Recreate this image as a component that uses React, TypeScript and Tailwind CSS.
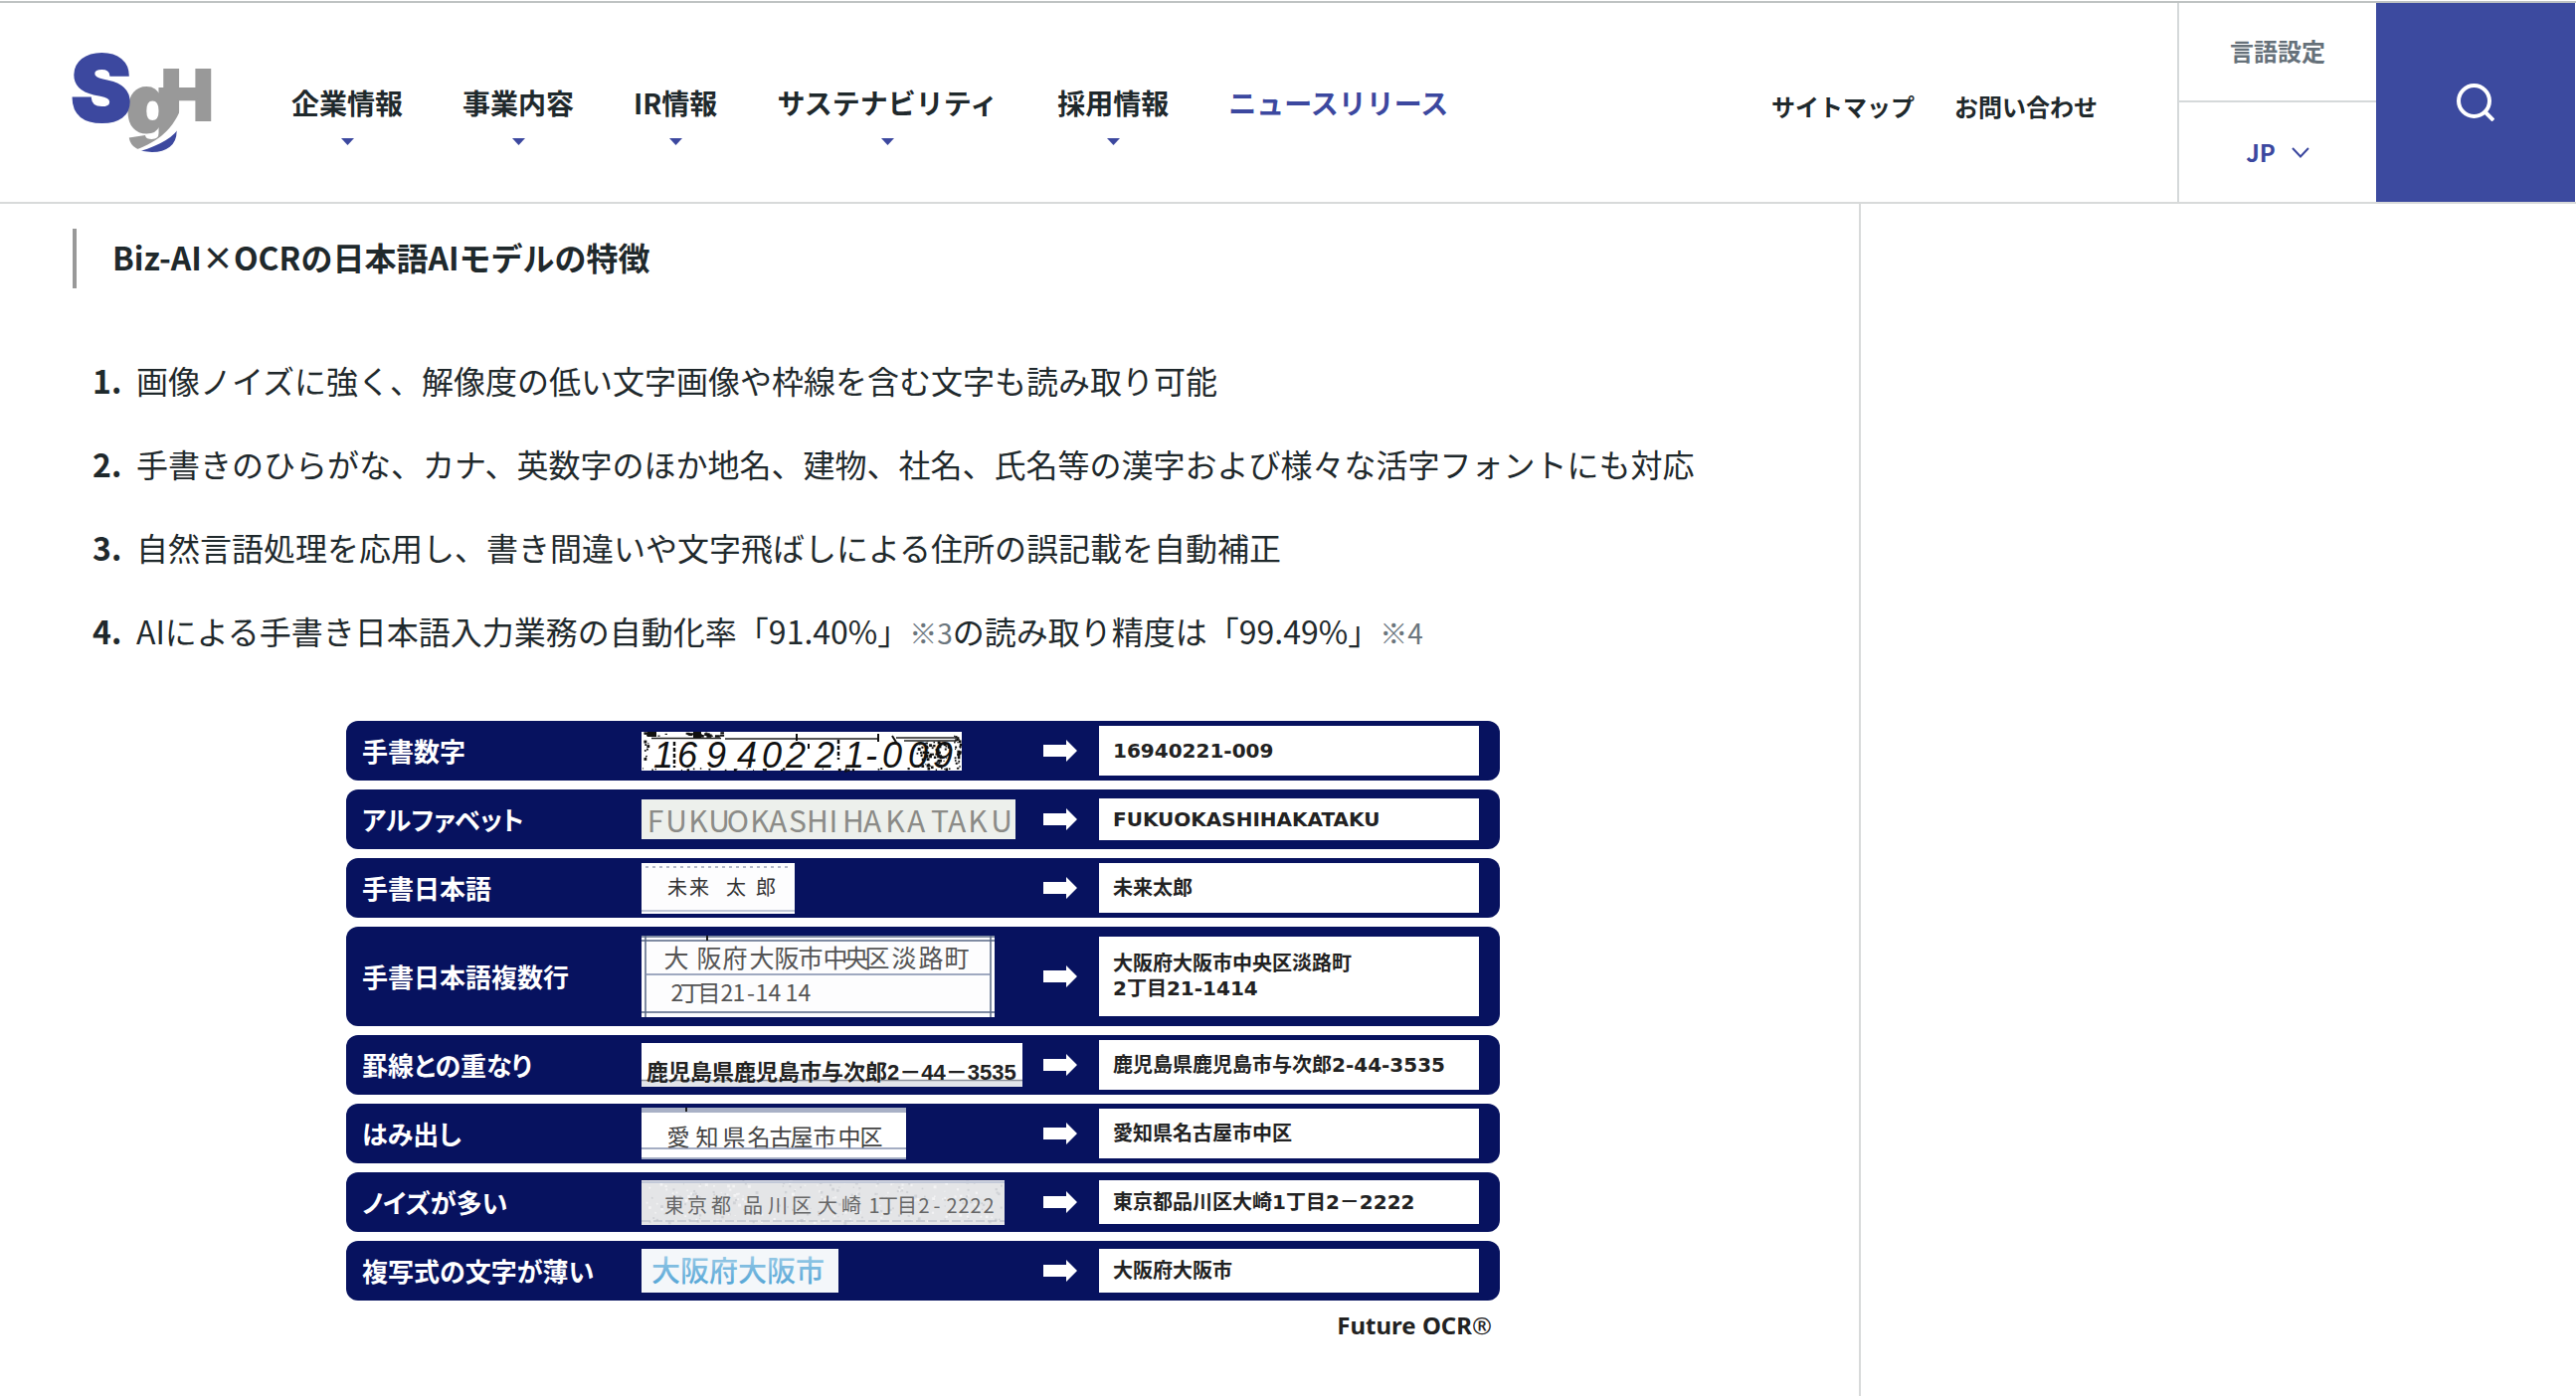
import type { ReactNode } from 'react';

const NAV = [
  { label: '企業情報', sub: true },
  { label: '事業内容', sub: true },
  { label: 'IR情報', sub: true },
  { label: 'サステナビリティ', sub: true },
  { label: '採用情報', sub: true },
  { label: 'ニュースリリース', sub: false },
];

// small deterministic generator for the speckles on scanned samples
function speckles(count: number, w: number, h: number, seed: number) {
  const out: { x: number; y: number; s: number }[] = [];
  let n = seed;
  const next = () => {
    n = (n * 1103515245 + 12345) % 2147483648;
    return n / 2147483648;
  };
  for (let i = 0; i < count; i++) out.push({ x: next() * w, y: next() * h, s: 1 + next() * 2 });
  return out;
}

function Glyphs({ text, xs, y, size, fill, skew = false }: { text: string; xs: number[]; y: number; size: number; fill: string; skew?: boolean }) {
  return (
    <text y={y} x={xs.join(' ')} fontSize={size} fill={fill} textAnchor="middle" fontStyle={skew ? 'italic' : 'normal'}>
      {text}
    </text>
  );
}

function Scan({ w, h, bg, children }: { w: number; h: number; bg: string; children: ReactNode }) {
  return (
    <svg width={w} height={h} viewBox={`0 0 ${w} ${h}`} className="block overflow-visible font-['Noto_Sans_CJK_JP',sans-serif] font-normal">
      <rect width={w} height={h} fill={bg} />
      {children}
    </svg>
  );
}

function NumberScan() {
  return (
    <Scan w={322} h={39} bg="#fff">
      {speckles(22, 80, 4, 7).map((p, i) => <rect key={i} x={p.x} y={p.y} width={p.s * 2} height={p.s} fill="#111" />)}
      {speckles(30, 318, 2, 31).map((p, i) => <rect key={i} x={p.x} y={36 + p.y} width={p.s} height={p.s} fill="#111" />)}
      {speckles(70, 34, 28, 11).map((p, i) => <rect key={i} x={276 + p.x} y={9 + p.y} width={p.s} height={p.s} fill="#111" />)}
      {speckles(30, 6, 37, 19).map((p, i) => <rect key={i} x={314 + p.x} y={p.y} width={p.s} height={p.s} fill="#111" />)}
      {speckles(10, 6, 20, 5).map((p, i) => <rect key={i} x={2 + p.x} y={8 + p.y} width={p.s} height={p.s} fill="#111" />)}
      <path d="M6 0h9v5H6zM52 0h8v6h-8z" fill="#111" />
      <path d="M10 6.500h70M84 7h154M256 6h62M264 9h52" stroke="#222" strokeWidth="1.500" />
      <path d="M33 10v26M198 8v20" stroke="#111" strokeWidth="2.500" strokeDasharray="4 2" />
      <path d="M156 2v7M238 2v8M252 4l5 8M168 12v5" stroke="#111" strokeWidth="2" />
      <g className="font-['Liberation_Sans',sans-serif]">
        <Glyphs text="16940221-009" xs={[22, 46, 75, 106, 131, 155, 184, 214, 231, 252, 278, 303]} y={36} size={36} fill="#111" skew />
      </g>
    </Scan>
  );
}

function AlphabetScan() {
  return (
    <Scan w={376} h={40} bg="#edf0ec">
      <Glyphs
        text="FUKUOKASHIHAKATAKU"
        xs={[14, 35, 57, 78, 97, 119, 137, 157, 177, 193, 213, 232, 255, 276, 300, 317, 338, 362]}
        y={33} size={30} fill="#8b8b87"
      />
    </Scan>
  );
}

function NameScan() {
  return (
    <Scan w={154} h={51} bg="#fdfdfe">
      <path d="M4 4h144" stroke="#9aa3b8" strokeWidth="1.5" strokeDasharray="3 4" />
      <path d="M0 48h154" stroke="#c3c9d6" strokeWidth="2" />
      <Glyphs text="未来太郎" xs={[36, 58, 95, 125]} y={32} size={20} fill="#333" />
    </Scan>
  );
}

function AddressScan() {
  return (
    <Scan w={355} h={82} bg="#fdfdfe">
      <path d="M0 1h355M0 5h355M0 77h355M4 0v82M351 0v82" stroke="#566584" strokeWidth="1.500" fill="none" />
      <path d="M4 39h347" stroke="#7f8cab" strokeWidth="1.500" />
      <path d="M66 0v5" stroke="#222" strokeWidth="2" />
      <Glyphs text="大阪府大阪市中央区淡路町" xs={[35, 68, 94, 121, 146, 170, 195, 216, 237, 264, 291, 317]} y={32} size={25} fill="#555" />
      <Glyphs text="2丁目21-1414" xs={[36, 50, 68, 86, 98, 110, 121, 134, 151, 164]} y={66} size={23} fill="#555" />
    </Scan>
  );
}

function RuledScan() {
  return (
    <Scan w={383} h={44} bg="#fff">
      <rect y="37" width="383" height="7" fill="#e3e5ea" />
      <path d="M0 37.500h383" stroke="#8e929c" strokeWidth="1.500" />
      <text x="5" y="37" fontSize="22" fill="#222" className="font-['Liberation_Sans','Noto_Sans_CJK_JP',sans-serif] font-bold">
        鹿児島県鹿児島市与次郎2－44－3535
      </text>
    </Scan>
  );
}

function OverflowScan() {
  return (
    <Scan w={266} h={52} bg="#fff">
      <rect width="266" height="5" fill="#a9b1c6" />
      <path d="M45 0v4" stroke="#222" strokeWidth="2" />
      <path d="M0 41h266M0 51h266" stroke="#8793b0" strokeWidth="1.500" />
      <Glyphs text="愛知県名古屋市中区" xs={[37, 66, 93, 118, 140, 161, 184, 209, 231]} y={38} size={23} fill="#444" />
    </Scan>
  );
}

function NoisyScan() {
  return (
    <Scan w={365} h={45} bg="#e4e5e7">
      {speckles(260, 362, 42, 3).map((p, i) => <rect key={i} x={p.x} y={p.y} width={p.s} height={p.s} fill={i % 2 ? '#f3f3f4' : '#d0d2d6'} />)}
      <path d="M0 2h365" stroke="#c2c9d9" strokeWidth="2" />
      <path d="M0 41h365" stroke="#b3b8c4" strokeWidth="1" strokeDasharray="9 3" />
      <Glyphs
        text="東京都品川区大崎1丁目2-2222"
        xs={[33, 56, 80, 112, 137, 161, 187, 211, 234, 248, 267, 284, 297, 312, 324, 336, 349]}
        y={33} size={20} fill="#666"
      />
    </Scan>
  );
}

function FaintScan() {
  return (
    <Scan w={198} h={44} bg="#f4f7fa">
      <defs>
        <linearGradient id="faint" x1="0" y1="0" x2="0" y2="1">
          <stop offset="0" stopColor="#a9d3ea" />
          <stop offset="1" stopColor="#4a9fd3" />
        </linearGradient>
      </defs>
      <text x="10" y="33" fontSize="29" fill="url(#faint)" className="font-medium">大阪府大阪市</text>
    </Scan>
  );
}

const ROWS = [
  { label: '手書数字', scan: <NumberScan />, result: ['16940221-009'], row: 'h-[60px]', box: 'h-[50px]' },
  { label: 'アルファベット', scan: <AlphabetScan />, result: ['FUKUOKASHIHAKATAKU'], row: 'h-[60px]', box: 'h-[42px]' },
  { label: '手書日本語', scan: <NameScan />, result: ['未来太郎'], row: 'h-[60px]', box: 'h-[50px]' },
  { label: '手書日本語複数行', scan: <AddressScan />, result: ['大阪府大阪市中央区淡路町', '2丁目21-1414'], row: 'h-[100px]', box: 'h-[80px]' },
  { label: '罫線との重なり', scan: <RuledScan />, result: ['鹿児島県鹿児島市与次郎2-44-3535'], row: 'h-[60px]', box: 'h-[50px]' },
  { label: 'はみ出し', scan: <OverflowScan />, result: ['愛知県名古屋市中区'], row: 'h-[60px]', box: 'h-[50px]' },
  { label: 'ノイズが多い', scan: <NoisyScan />, result: ['東京都品川区大崎1丁目2－2222'], row: 'h-[60px]', box: 'h-[44px]' },
  { label: '複写式の文字が薄い', scan: <FaintScan />, result: ['大阪府大阪市'], row: 'h-[60px]', box: 'h-[44px]' },
];

function Note({ children }: { children: ReactNode }) {
  return <span className="text-[28px] text-[#6b767d]">{children}</span>;
}

const FEATURES: ReactNode[] = [
  '画像ノイズに強く、解像度の低い文字画像や枠線を含む文字も読み取り可能',
  '手書きのひらがな、カナ、英数字のほか地名、建物、社名、氏名等の漢字および様々な活字フォントにも対応',
  '自然言語処理を応用し、書き間違いや文字飛ばしによる住所の誤記載を自動補正',
  <>AIによる手書き日本語入力業務の自動化率「91.40%」<Note>※3</Note>の読み取り精度は「99.49%」<Note>※4</Note></>,
];

function Logo() {
  return (
    <svg width="140" height="98" viewBox="0 0 140 98" className="block overflow-visible font-['Inter',sans-serif] font-black" aria-label="SGH">
      <defs>
        {/* the tail of the g turns blue below the swoosh */}
        <linearGradient id="tail" gradientUnits="userSpaceOnUse" x1="78" y1="70" x2="94" y2="96">
          <stop offset="0.6" stopColor="#999" />
          <stop offset="0.6" stopColor="#3c489f" />
        </linearGradient>
      </defs>
      <text x="89" y="67" fontSize="70" fill="#999" stroke="#999" strokeWidth="2">H</text>
      <text x="54" y="80" fontSize="83" fill="url(#tail)" stroke="url(#tail)" strokeWidth="2">g</text>
      <path d="M60 98C82 90 99 80 109 55V72C102 84 88 92 68 98z" fill="#fff" />
      <text x="-2" y="68" fontSize="92" fill="#3c489f" stroke="#3c489f" strokeWidth="2">S</text>
    </svg>
  );
}

function Header() {
  return (
    <header className="mt-px flex h-[204px] border-y-2 border-t-[#bfc3c3] border-b-[#d8dada]">
      <a href="#" className="mt-[51px] ml-[73px] self-start"><Logo /></a>

      <nav className="ml-20 pt-20">
        <ul className="flex gap-[60px]">
          {NAV.map(item => (
            <li key={item.label} className="flex flex-col items-center">
              <a href="#" className={`text-[28px] leading-10 font-bold whitespace-nowrap ${item.sub ? '' : 'text-[#3c489f]'}`}>
                {item.label}
              </a>
              {item.sub && (
                <svg width="13" height="7" viewBox="0 0 13 7" className="mt-4"><path d="M0 0h13L6.500 7z" fill="#3c489f" /></svg>
              )}
            </li>
          ))}
        </ul>
      </nav>

      <div className="mr-20 ml-auto flex gap-10 pt-[86px] text-2xl leading-9 font-bold whitespace-nowrap">
        <a href="#" className="self-start">サイトマップ</a>
        <a href="#" className="self-start">お問い合わせ</a>
      </div>

      <div className="flex w-[200px] flex-col border-l-2 border-[#d5d9da] text-2xl font-bold">
        <div className="flex h-1/2 items-center justify-center border-b-2 border-[#d5d9da] pb-0.5 text-[#66717a]">言語設定</div>
        <button type="button" className="flex h-1/2 items-center justify-center gap-4 text-[#3c489f]">
          JP
          <svg width="18" height="11" viewBox="0 0 18 11" fill="none" stroke="currentColor" strokeWidth="2"><path d="M1 1l8 8.500L17 1" /></svg>
        </button>
      </div>

      <button type="button" aria-label="検索" className="mr-px flex w-[200px] items-center justify-center bg-[#3c4a9f]">
        <svg width="38" height="38" viewBox="0 0 38 38" fill="none" stroke="#fff" strokeWidth="4">
          <circle cx="17.500" cy="17.500" r="15.500" />
          <path d="M28.500 28.500L37 37" />
        </svg>
      </button>
    </header>
  );
}

function OcrTable() {
  return (
    <div className="mx-auto mt-14 w-[1160px] max-w-full">
      <table className="w-full table-fixed border-separate border-spacing-x-0 border-spacing-y-[9px]">
        <colgroup>
          <col className="w-[297px]" />
          <col className="w-[404px]" />
          <col className="w-14" />
          <col />
        </colgroup>
        <tbody>
          {ROWS.map(r => (
            <tr key={r.label} className={r.row}>
              <th scope="row" className="rounded-l-xl bg-[#07125f] p-0 pl-4 text-left text-[26px] leading-9 font-bold whitespace-nowrap text-white [font-feature-settings:'palt']">
                {r.label}
              </th>
              <td className="bg-[#07125f] p-0">{r.scan}</td>
              <td className="bg-[#07125f] p-0">
                <svg width="34" height="22" viewBox="0 0 34 22" className="block"><path d="M0 5h23V0l11 11-11 11v-5H0z" fill="#fff" /></svg>
              </td>
              <td className="rounded-r-xl bg-[#07125f] p-0 pr-[21px]">
                <div className={`flex flex-col justify-center bg-white pl-3.5 font-['DejaVu_Sans','Noto_Sans_CJK_JP',sans-serif] text-xl leading-[25px] font-bold text-[#222] ${r.box}`}>
                  {r.result.map(line => <span key={line}>{line}</span>)}
                </div>
              </td>
            </tr>
          ))}
        </tbody>
      </table>
      <p className="pr-2 text-right font-['Noto_Sans',sans-serif] text-2xl leading-8 font-bold text-[#222]">
        Future OCR<span className="font-normal">®</span>
      </p>
    </div>
  );
}

export default function App() {
  return (
    <div lang="ja" className="flex min-h-screen flex-col bg-white font-['Noto_Sans_CJK_JP',sans-serif] text-[#1f292c]">
      <Header />
      <div className="flex flex-1">
        <main className="flex-1 border-r-2 border-[#d8dada] pt-[25px] pr-[86px] pl-[73px]">
          <h2 className="border-l-4 border-[#999] pb-1 pl-9 text-[32px] leading-[56px] font-bold">
            Biz-AI×OCRの日本語AIモデルの特徴
          </h2>
          <ol className="mt-[68px] ml-5 flex flex-col gap-9 text-[32px] leading-[48px]">
            {FEATURES.map((f, i) => (
              <li key={i} className="flex">
                <span className="w-11 shrink-0 font-bold">{i + 1}.</span>
                <p>{f}</p>
              </li>
            ))}
          </ol>
          <OcrTable />
        </main>
        <aside className="w-[719px] shrink-0" />
      </div>
    </div>
  );
}
